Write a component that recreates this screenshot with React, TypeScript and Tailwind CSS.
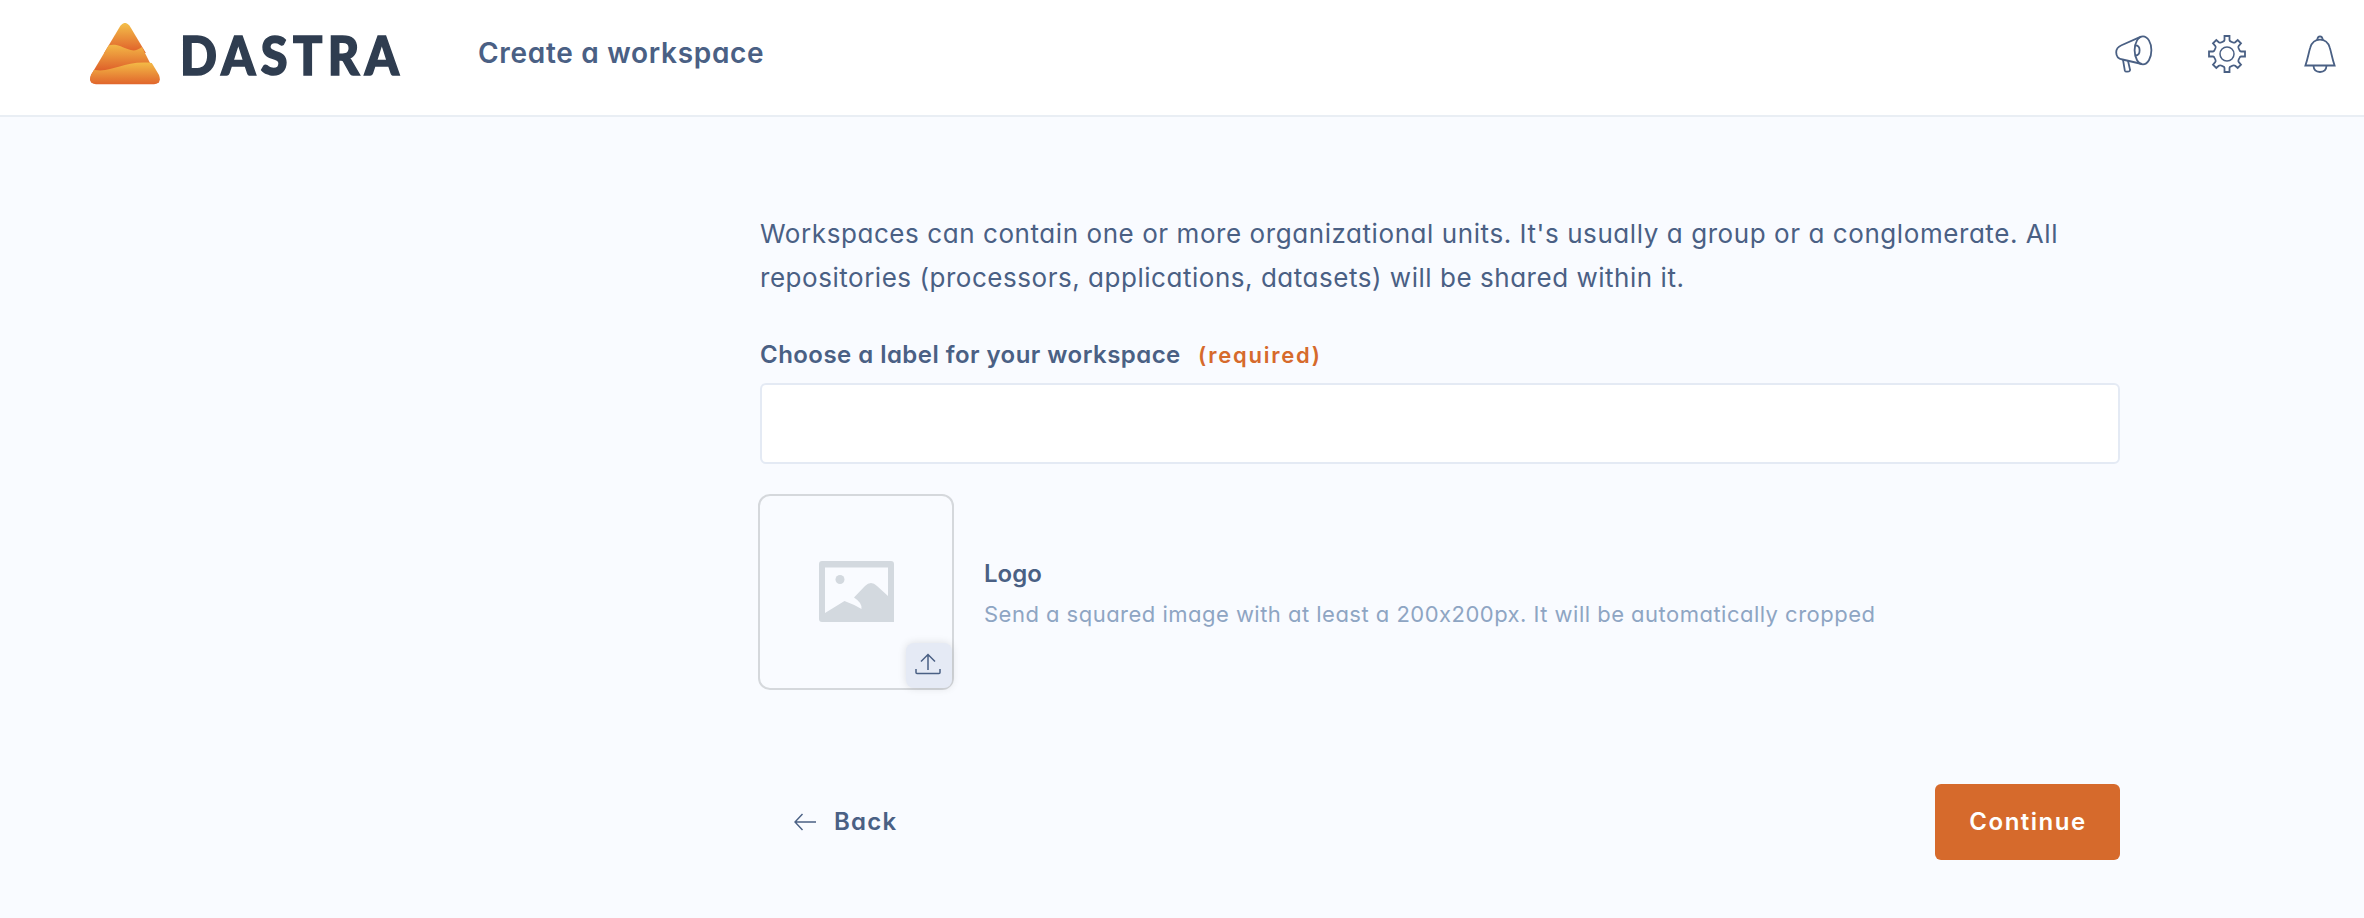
function BrandMark() {
  return (
    <svg className="h-[62px] w-[70px] shrink-0" viewBox="0 0 70 62" fill="none">
      <defs>
        <clipPath id="mark">
          <path d="M30.4 2.8Q35-3 39.6 2.8L69 52Q72 60.8 64 61.2H6Q-2 60.8 1 52Z" />
        </clipPath>
        <linearGradient id="top" x1="0" y1="0" x2="0" y2="1">
          <stop offset="0" stopColor="#f4c04a" />
          <stop offset="1" stopColor="#df5c29" />
        </linearGradient>
        <linearGradient id="middle" x1="0" y1="0" x2="0" y2="0.75">
          <stop offset="0" stopColor="#f3b746" />
          <stop offset="1" stopColor="#dc5627" />
        </linearGradient>
        <linearGradient id="base" x1="0" y1="0" x2="0" y2="1">
          <stop offset="0" stopColor="#f3ba46" />
          <stop offset="1" stopColor="#e0622b" />
        </linearGradient>
      </defs>
      <g clipPath="url(#mark)">
        <path d="M0 0H70V30H0Z" fill="url(#top)" />
        <path d="M0 30C14 26 18 19 30 23C40 27 44 30 52 24L70 60H0Z" fill="url(#middle)" />
        <path d="M0 46C22 52 31 37 62 40L70 46V62H0Z" fill="url(#base)" />
      </g>
    </svg>
  );
}

function Megaphone() {
  return (
    <svg className="h-[38px] w-[38px]" viewBox="0 0 38 38" fill="none" stroke="#4a6084" strokeWidth="1.8" strokeLinejoin="round">
      <ellipse cx="28" cy="15.3" rx="8.4" ry="14" />
      <path d="M26 1.6 6.5 10.2C2.800 11.800 1.200 14 1.200 17.200C1.200 21.500 4 24 7.500 24.500L27 29" />
      <path d="M20.300 10.300C23.500 10.300 24.600 12.600 24.600 15.300S23.500 20.500 20.500 20.500" />
      <path d="M8 24.800 9.800 35.400Q10.200 36.800 12 36.700L14 36.400Q15.400 36 15 34.600L13 25.800" />
    </svg>
  );
}

function Gear() {
  return (
    <svg className="h-[38px] w-[38px]" viewBox="0 0 38 38" fill="none" stroke="#4a6084" strokeWidth="1.8">
      <circle cx="19" cy="19" r="7" strokeWidth="1.5" />
      <path d="M16.500 1H21.500V5Q21.700 6.200 23 6.600L25 7.500Q26.200 8 27.200 7.200L29.700 5L33 8.300L30.800 10.800Q30 11.800 30.500 13L31.400 15Q31.800 16.300 33 16.500H37V21.500H33Q31.800 21.700 31.400 23L30.500 25Q30 26.200 30.800 27.200L33 29.700L29.700 33L27.200 30.800Q26.200 30 25 30.500L23 31.400Q21.700 31.800 21.500 33V37H16.500V33Q16.300 31.800 15 31.400L13 30.500Q11.800 30 10.800 30.800L8.300 33L5 29.700L7.200 27.200Q8 26.200 7.500 25L6.600 23Q6.200 21.700 5 21.500H1V16.500H5Q6.200 16.300 6.600 15L7.500 13Q8 11.800 7.200 10.800L5 8.300L8.300 5L10.800 7.200Q11.800 8 13 7.500L15 6.600Q16.300 6.200 16.500 5Z" />
    </svg>
  );
}

function Bell() {
  return (
    <svg className="h-[38px] w-[32px]" viewBox="0 0 32 38" fill="none" stroke="#4a6084" strokeWidth="1.8">
      <path d="M1.400 30.500C4 23 4.500 18 6.300 12.500C7.800 7.500 11.500 4.600 16 4.600S24.200 7.500 25.700 12.500C27.500 18 28 23 30.600 30.500Z" />
      <path d="M13.200 5C13.500 2.500 14.500 1.300 16 1.300S18.500 2.500 18.800 5" />
      <path d="M9.500 30.800C9.700 34.800 12.500 37 16 37S22.300 34.800 22.500 30.800" />
    </svg>
  );
}

function Placeholder() {
  return (
    <svg className="h-[61px] w-[75px]" viewBox="0 0 75 61">
      <path fill="#d3d9df" fillRule="evenodd" d="M3 0H72Q75 0 75 3V61H3Q0 61 0 58V3Q0 0 3 0ZM6 6.500V52L25.500 40Q34 43 42.500 48Q43.500 42 35 36.500L46 25Q52 19 58 25L69 35V6.500Z" />
      <circle cx="21" cy="18.500" r="4.500" fill="#d3d9df" />
    </svg>
  );
}

export default function App() {
  return (
    <div className="flex h-[918px] w-full flex-col overflow-hidden bg-[#f9fbff] font-['Inter',sans-serif] text-[#4a6084] [font-feature-settings:'cv11','calt'_0]">
      <header className="flex h-[117px] shrink-0 items-start border-b-2 border-[#e9eef4] bg-white pl-[90px] pr-[28px]">
        <div className="flex w-[388px] items-start pt-[23px]">
          <BrandMark />
          <span className="ml-[20px] mt-[4px] origin-left scale-x-[0.9] whitespace-nowrap font-['Lato',sans-serif] text-[54px] font-black leading-[56px] tracking-[6px] text-[#2f3d50] [-webkit-text-stroke:1.6px_#2f3d50]">DASTRA</span>
        </div>
        <h1 className="mt-[33px] whitespace-nowrap text-[28px] font-semibold leading-[40px] tracking-[0.7px]">Create a workspace</h1>
        <nav className="ml-auto flex items-start pt-[35px]">
          <button className="mr-[55px]"><Megaphone /></button>
          <button className="mr-[58px]"><Gear /></button>
          <button><Bell /></button>
        </nav>
      </header>

      <main className="ml-[760px] flex w-[1360px] flex-col">
        <p className="mt-[95px] whitespace-nowrap text-[26px] leading-[44px] tracking-[0.57px]">
          Workspaces can contain one or more organizational units. It&apos;s usually a group or a conglomerate. All
          <br />
          <span className="tracking-[0.53px]">repositories (processors, applications, datasets) will be shared within it.</span>
        </p>
        <label className="mt-[35px] flex h-[40px] items-baseline whitespace-nowrap text-[24px] font-semibold leading-[40px]">
          <span className="w-[438px] tracking-[0.46px]">Choose a label for your workspace</span>
          <span className="text-[22px] tracking-[1.75px] text-[#d66a2c]">(required)</span>
        </label>
        <input className="mt-[8px] h-[81px] w-full rounded-[6px] border-2 border-[#e4eaf4] bg-white px-6 text-[24px] outline-none" />

        <section className="-ml-[2px] mt-[30px] flex">
          <div className="relative flex h-[196px] w-[196px] items-center justify-center rounded-[12px] border-2 border-[#d5d8dc] pb-[1px]">
            <Placeholder />
            <button className="absolute bottom-0 right-0 flex h-[45px] w-[46px] items-center justify-center rounded-[8px] bg-[#e5eaf5] pr-[2px] pb-[3px] shadow-[0_0_8px_rgba(0,0,0,0.12)]">
              <svg className="h-[22px] w-[26px]" viewBox="0 0 26 22" fill="none" stroke="#4a6084" strokeWidth="1.500">
                <path d="M13 17V1.500M6 8.500 13 1.500 20 8.500M1 16V19.500Q1 20.500 2 20.500H24Q25 20.500 25 19.500V16" />
              </svg>
            </button>
          </div>
          <div className="ml-[30px] flex flex-col whitespace-nowrap pt-[60px]">
            <h2 className="text-[24px] font-semibold leading-[40px]">Logo</h2>
            <p className="text-[22px] leading-[41px] tracking-[0.48px] text-[#8ea5c3]">Send a squared image with at least a 200x200px. It will be automatically cropped</p>
          </div>
        </section>

        <footer className="mt-[94px] flex h-[76px] items-center justify-between text-[24px] font-semibold">
          <button className="ml-[34px] flex items-center whitespace-nowrap">
            <svg className="mr-[17px] h-[18px] w-[23px]" viewBox="0 0 23 18" fill="none" stroke="#4a6084" strokeWidth="1.400">
              <path d="M22 9H1M8.500 1 1 9 8.500 17" />
            </svg>
            <span className="tracking-[1.2px]">Back</span>
          </button>
          <button className="flex h-[76px] w-[185px] items-center justify-center whitespace-nowrap rounded-[6px] bg-[#d66a2c] text-white">
            <span className="pl-[1px] tracking-[1.5px]">Continue</span>
          </button>
        </footer>
      </main>
    </div>
  );
}
